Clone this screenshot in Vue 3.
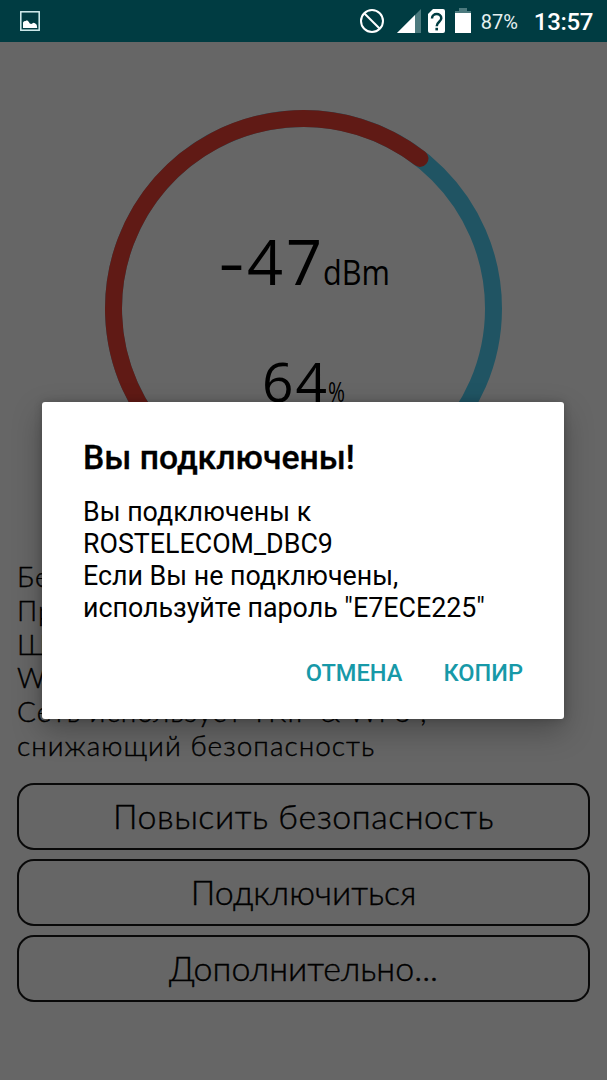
<template>
  <div class="screen">
    <header class="statusbar">
      <svg class="picture" width="20" height="20" viewBox="0 0 20 20">
        <rect x="0.8" y="0.8" width="18.4" height="18.4" fill="none" stroke="#d5f0f1" stroke-width="1.5" />
        <path d="M3 17v-5.500l1-1.200 1.600-.4L7 9.300l1.500 1.200L9.800 12.500l1.500.4 2.200-1.200 1.500.5 1.700 1.600.5 3.200z" fill="#fff" />
      </svg>
      <div class="indicators">
        <svg class="blocked" width="24" height="24" viewBox="0 0 24 24">
          <circle cx="12" cy="12" r="11" fill="none" stroke="#fff" stroke-width="2" />
          <path d="M4.200 4.200 19.800 19.800" stroke="#fff" stroke-width="2" />
        </svg>
        <svg class="signal" width="24" height="24" viewBox="0 0 24 24">
          <path d="M24 0v24H0z" fill="#4c7a7e" />
          <path d="M18 6v18H0z" fill="#fff" />
        </svg>
        <svg class="sim" width="17" height="24" viewBox="0 0 17 24">
          <path d="M5 0h10a2 2 0 0 1 2 2v20a2 2 0 0 1-2 2H2a2 2 0 0 1-2-2V5z" fill="#fff" />
          <path d="M4 9.500C4 3.600 13.400 3.700 13.300 9.300c-.1 3.500-4.600 3.500-4.600 8" fill="none" stroke="#003c42" stroke-width="2.500" />
          <rect x="7.400" y="18.800" width="2.600" height="2.600" fill="#003c42" />
        </svg>
        <svg class="battery" width="16" height="25" viewBox="0 0 16 25">
          <path d="M4 0h8v3h4v3H0V3h4z" fill="#4c7a7e" />
          <rect y="5" width="16" height="20" fill="#fff" />
        </svg>
        <span class="percent">87%</span>
        <span class="clock">13:57</span>
      </div>
    </header>

    <main class="content">
      <svg class="gauge" width="607" height="508" viewBox="0 42 607 508">
        <path :d="arc(1)" class="track" />
        <path :d="arc(level / 100)" class="value" />
        <g class="reading">
          <text y="284.500" font-size="63">
            <tspan x="218.500" textLength="26" lengthAdjust="spacingAndGlyphs" class="minus">-</tspan>
            <tspan x="247">4</tspan>
            <tspan x="286">7</tspan>
          </text>
          <text x="323" y="284.500" font-size="34" textLength="67" lengthAdjust="spacingAndGlyphs">dBm</text>
          <text x="262" y="402" font-size="55" textLength="65">{{ level }}</text>
          <text x="328" y="402" font-size="28" textLength="17" lengthAdjust="spacingAndGlyphs">%</text>
        </g>
      </svg>
      <div class="details">
        <p v-for="line in details" :key="line">{{ line }}</p>
      </div>
      <div class="actions">
        <button v-for="action in actions" :key="action.label" :class="action.size">{{ action.label }}</button>
      </div>
    </main>

    <div class="scrim">
      <section class="dialog">
        <h2>Вы подключены!</h2>
        <p>
          Вы подключены к<br />
          {{ network }}<br />
          Если Вы не подключены,<br />
          используйте пароль "{{ password }}"
        </p>
        <div class="dialog-buttons">
          <button>ОТМЕНА</button>
          <button>КОПИР</button>
        </div>
      </section>
    </div>
  </div>
</template>

<script setup>
import { ref } from "vue";

const level = ref(64);
const network = ref("ROSTELECOM_DBC9");
const password = ref("E7ECE225");

const details = [
  "Бе",
  "Пр",
  "Ш",
  "W",
  "Сеть использует TKIP & WPS ,",
  "снижающий безопасность"
];

const actions = [
  { label: "Повысить безопасность", size: "long" },
  { label: "Подключиться", size: "middle" },
  { label: "Дополнительно...", size: "short" }
];

const center = { x: 303.5, y: 308.5 };
const radius = 190;

function point(deg) {
  const rad = (deg * Math.PI) / 180;
  return `${center.x + radius * Math.sin(rad)} ${center.y - radius * Math.cos(rad)}`;
}

// 270 degree dial, opened at the bottom
function arc(part) {
  const sweep = 270 * part;
  return `M${point(-135)} A${radius} ${radius} 0 ${sweep > 180 ? 1 : 0} 1 ${point(-135 + sweep)}`;
}
</script>

<style>
body { margin: 0; background: #666; }
</style>

<style scoped>
.screen { position: relative; display: flex; flex-direction: column; height: 1080px; overflow: hidden; background: #fff; font-family: Roboto, "Liberation Sans", sans-serif; }
.statusbar { position: relative; z-index: 2; display: flex; justify-content: space-between; height: 42px; box-sizing: border-box; padding: 0 14px 0 20px; background: #003c42; color: #fff; }
.picture { margin-top: 11px; }
.indicators { display: flex; align-items: flex-start; }
.blocked { margin-top: 9px; }
.signal { margin: 9px 0 0 13px; }
.sim { margin: 9px 0 0 7px; }
.battery { margin: 8px 0 0 10px; }
.percent { margin-left: 10px; font-size: 20px; line-height: 44px; color: #e6f0f0; }
.clock { margin-left: 16px; font-size: 24px; font-weight: 500; line-height: 45px; letter-spacing: -0.35px; }
.content { display: flex; flex-direction: column; color: #000; font-family: Lato, "Open Sans", sans-serif; font-weight: 300; }
.gauge { display: block; }
.track, .value { fill: none; stroke-width: 17; stroke-linecap: round; }
.track { stroke: #52d3f7; }
.value { stroke: #ef4335; }
.reading { font-family: "Open Sans", sans-serif; font-weight: 400; }
.minus { font-weight: 400; }
.details { padding: 10px 17px 0; }
.details p { margin: 0; font-size: 28px; line-height: 33.8px; letter-spacing: 1px; white-space: nowrap; -webkit-text-stroke: 0.4px #000; }
.actions { display: flex; flex-direction: column; gap: 9px; padding: 20px 17px 0; }
.actions button { height: 67px; padding: 0 0 1px; border: 2px solid #181818; border-radius: 17px; background: none; color: #000; font: inherit; font-size: 34px; -webkit-text-stroke: 0.4px #000; }
.actions .long { letter-spacing: 0.5px; }
.scrim { position: absolute; inset: 42px 0 0; z-index: 1; display: flex; align-items: flex-start; justify-content: center; padding-top: 360px; background: rgba(0, 0, 0, 0.6); }
.dialog { width: 522px; height: 317px; box-sizing: border-box; margin-left: -1px; padding: 36px 41px 0; border-radius: 3px; background: #fff; box-shadow: 0 12px 30px rgba(0, 0, 0, 0.28), 0 0 8px rgba(0, 0, 0, 0.2); color: #000; }
.dialog h2 { margin: 0; font-size: 33.7px; font-weight: 500; line-height: 40px; white-space: nowrap; -webkit-text-stroke: 0.3px #000; }
.dialog p { margin: 18px 0 0; font-size: 26.8px; line-height: 32.1px; white-space: nowrap; }
.dialog-buttons { display: flex; justify-content: flex-end; gap: 41px; margin-top: 33px; }
.dialog-buttons button { padding: 0; border: 0; background: none; color: #1799a8; font-family: inherit; font-size: 23.6px; font-weight: 500; line-height: 32px; }
</style>
